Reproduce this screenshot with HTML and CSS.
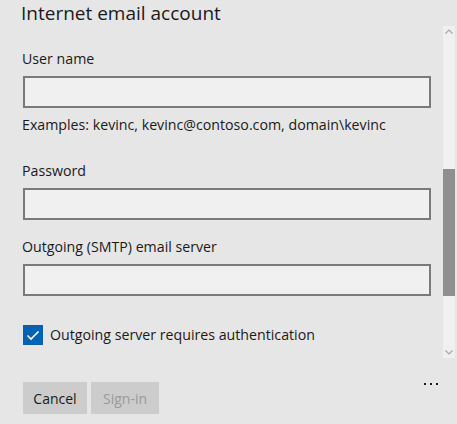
FILE: index.html
```html
<!DOCTYPE html>
<html>
<head>
<meta charset="utf-8">
<link rel="stylesheet" href="styles.css">
</head>
<body>
<div class="page">
  <h1 class="title">Internet email account</h1>
  <div class="main">
    <div class="content">
      <div class="label">User name</div>
      <div class="input"></div>
      <div class="hint">Examples: kevinc, kevinc@contoso.com, domain\kevinc</div>
      <div class="label label-spaced">Password</div>
      <div class="input"></div>
      <div class="label label-tight">Outgoing (SMTP) email server</div>
      <div class="input"></div>
      <div class="check-row">
        <span class="checkbox">
          <svg width="20" height="20" viewBox="0 0 20 20"><path d="M4.5 10.5 L8 14 L15.5 6.5" fill="none" stroke="#fff" stroke-width="1.6"/></svg>
        </span>
        <span class="check-label">Outgoing server requires authentication</span>
      </div>
    </div>
    <div class="scrollbar">
      <div class="arrow arrow-up"><svg width="12" height="8" viewBox="0 0 12 8"><path d="M2.5 5.5 L6 2 L9.5 5.5" fill="none" stroke="#a6a6a6" stroke-width="1.2"/></svg></div>
      <div class="track">
        <div class="thumb"></div>
      </div>
      <div class="arrow arrow-down"><svg width="12" height="8" viewBox="0 0 12 8"><path d="M2.5 2.5 L6 6 L9.5 2.5" fill="none" stroke="#a6a6a6" stroke-width="1.2"/></svg></div>
    </div>
  </div>
  <div class="footer">
    <button class="btn">Cancel</button>
    <button class="btn btn-disabled">Sign-in</button>
    <div class="more"><span></span><span></span><span></span></div>
  </div>
</div>
</body>
</html>
```
FILE: styles.css
```css
html, body {
  margin: 0;
  padding: 0;
  background: #e6e6e6;
}
body {
  font-family: "Open Sans", "Noto Sans", sans-serif;
  color: #1a1a1a;
  width: 457px;
  height: 424px;
  overflow: hidden;
}
.page {
  display: flex;
  flex-direction: column;
}
.title {
  margin: 0;
  padding-left: 21px;
  font-size: 19px;
  font-weight: 400;
  line-height: 26px;
  height: 26px;
  color: #1a1a1a;
}
.main {
  display: flex;
  height: 332px;
}
.content {
  flex: 1;
  padding: 22px 12px 0 23px;
  display: flex;
  flex-direction: column;
}
.label {
  font-size: 14.2px;
  line-height: 20px;
  padding-top: 1px;
  margin-bottom: 7px;
  margin-left: -1px;
}
.label-spaced { margin-top: 25px; }
.label-tight { margin-top: 16px; }
.input {
  height: 28px;
  border: 2px solid #7a7a7a;
  background: #f0f0f0;
}
.hint {
  font-size: 14.2px;
  line-height: 20px;
  margin-top: 7px;
  margin-left: -1px;
}
.check-row {
  display: flex;
  align-items: center;
  gap: 7px;
  margin-top: 29px;
}
.checkbox {
  width: 20px;
  height: 20px;
  background: #0063b1;
  display: flex;
}
.check-label {
  font-size: 14.2px;
  line-height: 20px;
}
.scrollbar {
  width: 12px;
  margin-right: 2px;
  background: #f0f0f0;
  display: flex;
  flex-direction: column;
}
.arrow {
  height: 12px;
  display: flex;
  align-items: center;
  justify-content: center;
}
.track {
  flex: 1;
  padding-top: 131px;
}
.thumb {
  height: 127px;
  background: #8f8f8f;
}
.footer {
  display: flex;
  align-items: flex-start;
  gap: 4px;
  padding: 24px 0 0 23px;
}
.btn {
  font-family: inherit;
  font-size: 14px;
  height: 32px;
  border: none;
  background: #cccccc;
  color: #1a1a1a;
  padding: 0 10px;
  margin: 0;
  width: 64px;
}
.btn-disabled {
  color: #9a9a9a;
  width: 68px;
}
.more {
  margin-left: auto;
  margin-right: 19px;
  margin-top: 1px;
  display: flex;
  gap: 4px;
}
.more span {
  width: 2px;
  height: 2px;
  background: #1a1a1a;
}
```
